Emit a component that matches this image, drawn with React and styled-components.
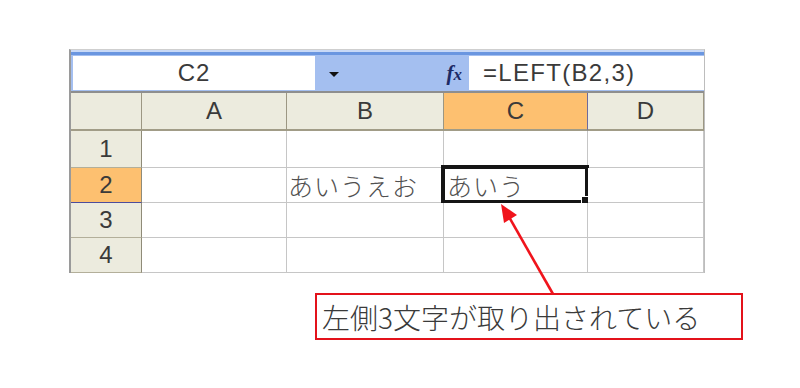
import React from "react";
import styled, { createGlobalStyle } from "styled-components";

const GlobalStyle = createGlobalStyle`
  html, body { margin: 0; padding: 0; background: #ffffff; }
  body { font-family: "Liberation Sans", "Noto Sans CJK JP", sans-serif; }
  * { box-sizing: border-box; }
`;

const Page = styled.div`
  position: relative;
  width: 800px;
  height: 388px;
  padding: 49px 0 0 69px;
  display: flex;
  flex-direction: column;
  align-items: flex-start;
  overflow: hidden;
`;

const Sheet = styled.div`
  width: 636px;
  border-top: 1px solid #cfcfcf;
  border-left: 2px solid #9a9a9a;
  border-right: 1px solid #bdbdbd;
  display: flex;
  flex-direction: column;
`;

const FormulaBar = styled.div`
  height: 43px;
  display: flex;
  align-items: stretch;
  padding: 6px 0 1px 2px;
  border-bottom: 2px solid #8e8e8e;
  background: linear-gradient(
    to bottom,
    #c9d9f6 0px,
    #c9d9f6 2px,
    #6a96e0 2px,
    #6a96e0 5px,
    #a4bff0 5px,
    #a4bff0 100%
  );
`;

const NameBox = styled.div`
  width: 242px;
  background: #ffffff;
  display: flex;
  align-items: center;
  justify-content: center;
  font-family: "Liberation Sans", sans-serif;
  font-size: 24px;
  letter-spacing: 1px;
  color: #3a3a3a;
`;

const ToolArea = styled.div`
  width: 154px;
  display: flex;
  align-items: center;
  justify-content: space-between;
  padding-right: 7px;
`;

const DropButton = styled.div`
  width: 37px;
  display: flex;
  align-items: center;
  justify-content: center;
  &::after {
    content: "";
    display: block;
    width: 0;
    height: 0;
    border-left: 5px solid transparent;
    border-right: 5px solid transparent;
    border-top: 5px solid #111;
    margin-top: 2px;
  }
`;

const Fx = styled.span`
  font-family: "Liberation Serif", serif;
  font-style: italic;
  font-weight: bold;
  font-size: 21px;
  color: #1d2a66;
  line-height: 1;
  & small {
    font-size: 17px;
  }
`;

const FormulaField = styled.div`
  flex: 1;
  background: #ffffff;
  display: flex;
  align-items: center;
  padding-left: 14px;
  font-family: "Liberation Sans", sans-serif;
  font-size: 24px;
  letter-spacing: 1.3px;
  color: #3a3a3a;
`;

const Grid = styled.div`
  display: grid;
  grid-template-columns: 71px 145px 157px 144px 116px;
  grid-template-rows: 38px 37px 35px 35px 35px;
`;

const ColHeader = styled.div`
  background: ${(p) => (p.$active ? "#fdc070" : "#ecebde")};
  border-right: 1px solid ${(p) => (p.$active ? "#6e6a9c" : "#9c9783")};
  border-bottom: 2px solid #a19c87;
  display: flex;
  align-items: center;
  justify-content: center;
  font-family: "Liberation Sans", sans-serif;
  font-size: 24px;
  color: #3a3a3a;
`;

const RowHeader = styled.div`
  background: ${(p) => (p.$active ? "#fdc070" : "#ecebde")};
  border-right: 1px solid #8f8b78;
  border-bottom: 1px solid ${(p) => (p.$active ? "#4c4c9c" : "#b3af9a")};
  display: flex;
  align-items: center;
  justify-content: center;
  font-family: "Liberation Sans", sans-serif;
  font-size: 24px;
  color: #3a3a3a;
`;

const Cell = styled.div`
  position: relative;
  background: #ffffff;
  border-right: 1px solid #c6c6c6;
  border-bottom: 1px solid #c6c6c6;
  display: flex;
  align-items: center;
  padding-left: ${(p) => p.$pad || 2}px;
  font-family: "Noto Sans CJK JP", sans-serif;
  font-weight: 300;
  font-size: 25px;
  letter-spacing: 1px;
  color: #505050;
  white-space: nowrap;
`;

const SelectionFrame = styled.div`
  position: absolute;
  left: -3px;
  top: -3px;
  width: 148px;
  height: 39px;
  border: 4px solid #151515;
  pointer-events: none;
`;

const FillHandle = styled.div`
  position: absolute;
  right: -7px;
  bottom: -7px;
  width: 9px;
  height: 9px;
  background: #151515;
  border: 1px solid #ffffff;
  box-sizing: content-box;
`;

const Callout = styled.div`
  margin-top: 20px;
  margin-left: 246px;
  width: 428px;
  height: 47px;
  border: 2px solid #e3121b;
  display: flex;
  align-items: center;
  padding-left: 5px;
  font-family: "Noto Sans CJK JP", sans-serif;
  font-weight: 300;
  font-size: 28px;
  color: #3a3a3a;
  white-space: nowrap;
`;

const ArrowLayer = styled.svg`
  position: absolute;
  left: 0;
  top: 0;
  width: 800px;
  height: 388px;
  pointer-events: none;
`;

const columns = ["A", "B", "C", "D"];
const rows = [
  { n: "1", cells: ["", "", "", ""] },
  { n: "2", cells: ["", "あいうえお", "あいう", ""] },
  { n: "3", cells: ["", "", "", ""] },
  { n: "4", cells: ["", "", "", ""] },
];

export default function App() {
  return (
    <>
      <GlobalStyle />
      <Page>
        <Sheet>
          <FormulaBar>
            <NameBox>C2</NameBox>
            <ToolArea>
              <DropButton />
              <Fx>
                f<small>x</small>
              </Fx>
            </ToolArea>
            <FormulaField>=LEFT(B2,3)</FormulaField>
          </FormulaBar>
          <Grid>
            <ColHeader />
            {columns.map((c) => (
              <ColHeader key={c} $active={c === "C"}>
                {c}
              </ColHeader>
            ))}
            {rows.map((r) => (
              <React.Fragment key={r.n}>
                <RowHeader $active={r.n === "2"}>{r.n}</RowHeader>
                {r.cells.map((v, i) => {
                  const selected = r.n === "2" && i === 2;
                  return (
                    <Cell key={i} $pad={selected ? 3 : 1}>
                      {v}
                      {selected && (
                        <SelectionFrame>
                          <FillHandle />
                        </SelectionFrame>
                      )}
                    </Cell>
                  );
                })}
              </React.Fragment>
            ))}
          </Grid>
        </Sheet>
        <Callout>左側3文字が取り出されている</Callout>
        <ArrowLayer viewBox="0 0 800 388">
          <line
            x1="553"
            y1="294"
            x2="509"
            y2="217"
            stroke="#f0141c"
            strokeWidth="2.6"
          />
          <polygon points="501,204 517,215 504,223" fill="#f0141c" />
        </ArrowLayer>
      </Page>
    </>
  );
}
